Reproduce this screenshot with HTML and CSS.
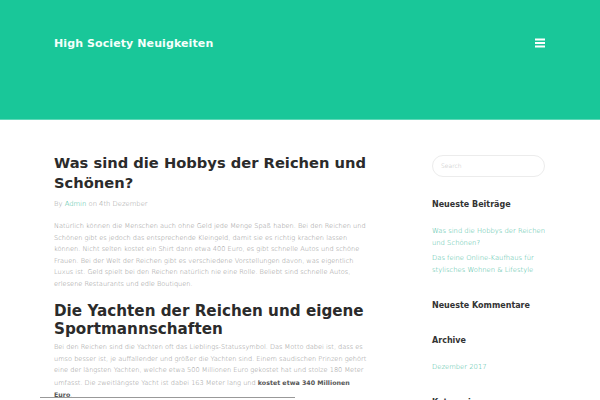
FILE: index.html
```html
<!DOCTYPE html>
<html lang="de">
<head>
<meta charset="utf-8">
<link rel="stylesheet" href="styles.css">
</head>
<body>
<header class="site-header">
  <div class="bar">
    <div class="site-title">High Society Neuigkeiten</div>
    <svg class="menu-icon" width="10" height="10" viewBox="0 0 10 10"><rect x="0" y="0.5" width="10" height="2" fill="#fff"/><rect x="0" y="4" width="10" height="2" fill="#fff"/><rect x="0" y="7.5" width="10" height="2" fill="#fff"/></svg>
  </div>
</header>
<div class="wrap">
  <main class="main">
    <h1 class="post-title">Was sind die Hobbys der Reichen und Schönen?</h1>
    <div class="meta">By <a href="#">Admin</a> on 4th Dezember</div>
    <p class="text">Natürlich können die Menschen auch ohne Geld jede Menge Spaß haben. Bei den Reichen und<br>Schönen gibt es jedoch das entsprechende Kleingeld, damit sie es richtig krachen lassen<br>können. Nicht selten kostet ein Shirt dann etwa 400 Euro, es gibt schnelle Autos und schöne<br>Frauen. Bei der Welt der Reichen gibt es verschiedene Vorstellungen davon, was eigentlich<br>Luxus ist. Geld spielt bei den Reichen natürlich nie eine Rolle. Beliebt sind schnelle Autos,<br>erlesene Restaurants und edle Boutiquen.</p>
    <h2 class="sub-title">Die Yachten der Reichen und eigene Sportmannschaften</h2>
    <p class="text">Bei den Reichen sind die Yachten oft das Lieblings-Statussymbol. Das Motto dabei ist, dass es<br>umso besser ist, je auffallender und größer die Yachten sind. Einem saudischen Prinzen gehört<br>eine der längsten Yachten, welche etwa 500 Millionen Euro gekostet hat und stolze 180 Meter<br>umfasst. Die zweitlängste Yacht ist dabei 163 Meter lang und <b>kostet etwa 340 Millionen<br>Euro</b>.</p>
    <div class="rule"></div>
  </main>
  <aside class="sidebar">
    <div class="search">Search</div>
    <h3 class="widget-title">Neueste Beiträge</h3>
    <ul class="links">
      <li><a href="#">Was sind die Hobbys der Reichen<br>und Schönen?</a></li>
      <li><a href="#">Das feine Online-Kaufhaus für<br>stylisches Wohnen &amp; Lifestyle</a></li>
    </ul>
    <h3 class="widget-title">Neueste Kommentare</h3>
    <h3 class="widget-title">Archive</h3>
    <ul class="links">
      <li><a href="#">Dezember 2017</a></li>
    </ul>
    <h3 class="widget-title">Kategorien</h3>
  </aside>
</div>
</body>
</html>
```
FILE: styles.css
```css
html, body { margin: 0; padding: 0; background: #fff; }
body { font-family: "DejaVu Sans", sans-serif; font-weight: 200; overflow: hidden; height: 400px; }
.site-header { background: #19c799; height: 119px; border-bottom: 1px solid #5fd8b8; }
.bar { display: flex; justify-content: space-between; align-items: center; padding: 37px 55px 0 54px; }
.site-title { font-weight: bold; font-size: 11px; color: #f4fffb; letter-spacing: 0.1px; }
.menu-icon { display: block; margin-top: -2px; }
.wrap { display: flex; padding-left: 54px; }
.main { width: 330px; padding-top: 33px; }
.post-title { font-weight: bold; font-size: 14.7px; line-height: 20px; color: #2b2b2b; margin: 0 0 7px; }
.meta { font-size: 6.8px; color: #999; margin-bottom: 13px; }
.meta a { color: #2fb896; text-decoration: none; }
.text { font-size: 6.6px; line-height: 11.5px; color: #8f8f8f; margin: 0 0 12px; white-space: nowrap; }
.text b { font-weight: bold; color: #555; font-size: 6.3px; }
.sub-title { font-weight: bold; font-size: 15.2px; line-height: 18px; color: #2b2b2b; margin: 0 0 4px; }
.rule { width: 255px; height: 1px; background: #999; margin: -17px 0 0 -14px; }
.sidebar { width: 113px; margin-left: 48px; padding-top: 35px; }
.search { height: 20px; border: 1px solid #ececec; border-radius: 11px; font-size: 6px; color: #bbb; padding-left: 8px; line-height: 20px; margin-bottom: 23px; }
.widget-title { font-weight: bold; font-size: 8px; line-height: 10px; color: #333; margin: 0 0 25px; }
.links { list-style: none; margin: -10px 0 25px; padding: 0; }
.links li { font-size: 6.8px; line-height: 12px; margin-bottom: 3px; white-space: nowrap; }
.links a { color: #3bb99b; text-decoration: none; }
```
